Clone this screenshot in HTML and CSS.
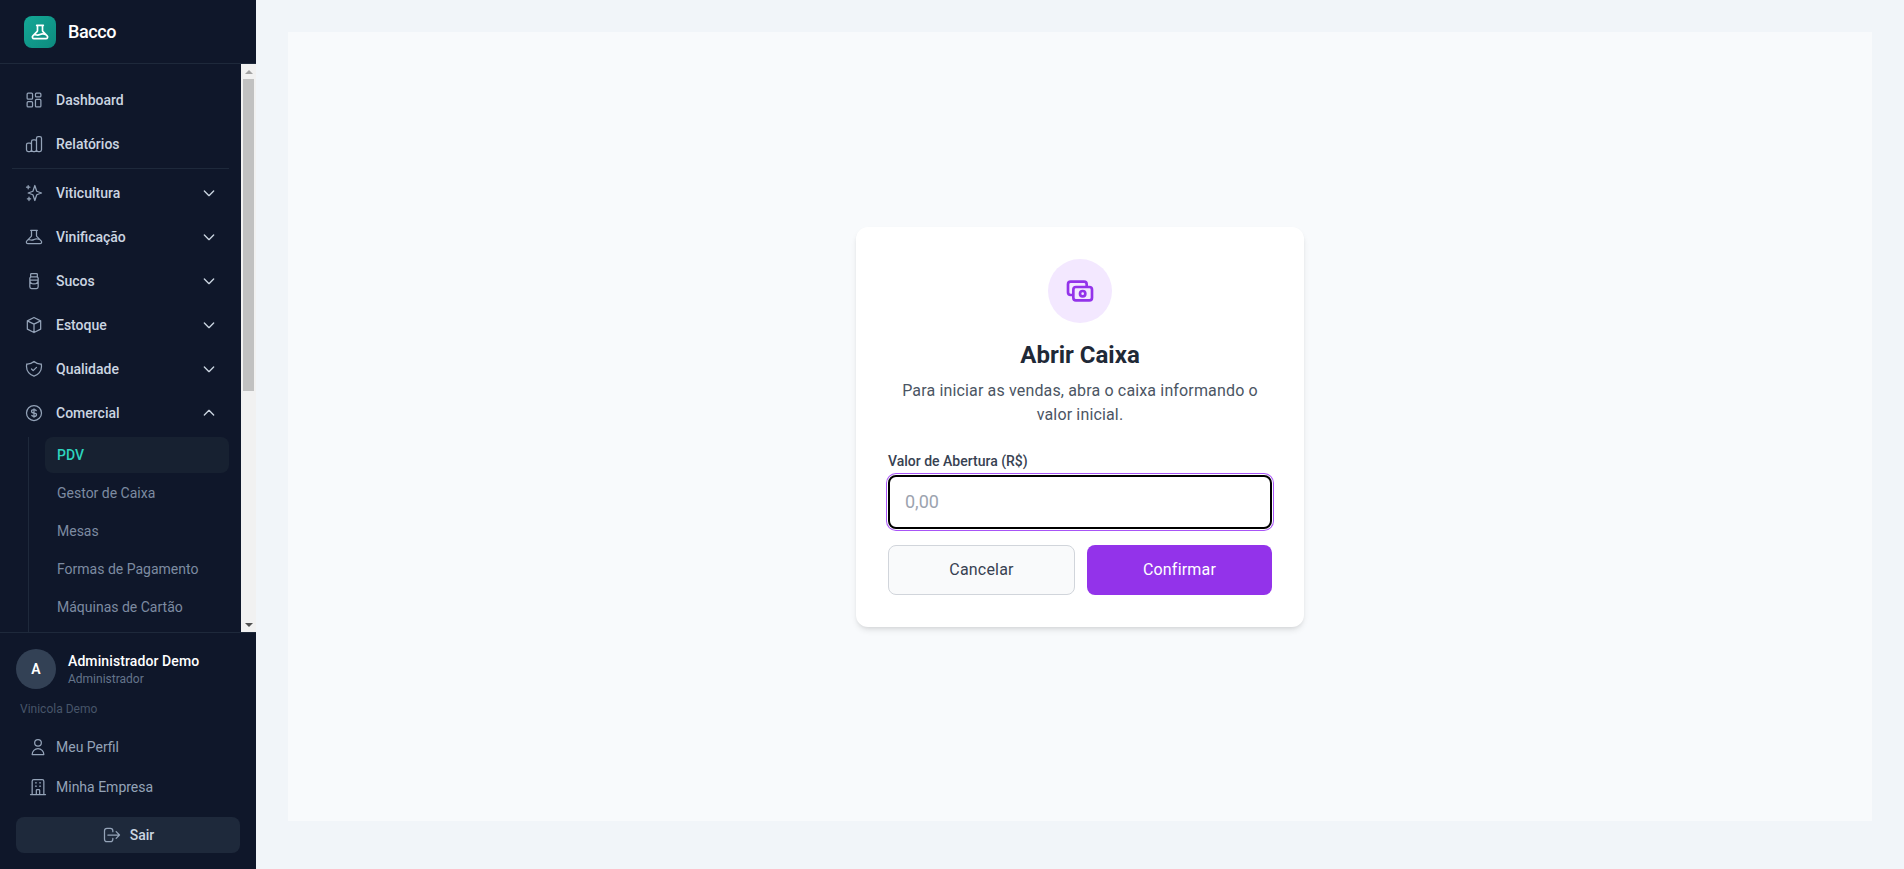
FILE: index.html
```html
<!DOCTYPE html>
<html lang="en">
<head>
    <meta charset="UTF-8">
    <meta name="viewport" content="width=device-width, initial-scale=1.0">
    <title>Bacco - PDV</title>
    <link rel="stylesheet" href="styles.css">
</head>
<body>
    <div class="app">
        <aside class="sidebar">
            <div class="brand">
                <span class="brand-logo">
                    <svg viewBox="0 0 24 24"><path d="M19.428 15.428a2 2 0 00-1.022-.547l-2.387-.477a6 6 0 00-3.86.517l-.318.158a6 6 0 01-3.86.517L6.05 15.21a2 2 0 00-1.806.547M8 4h8l-1 1v5.172a2 2 0 00.586 1.414l5 5c1.26 1.26.367 3.414-1.415 3.414H4.828c-1.782 0-2.674-2.154-1.414-3.414l5-5A2 2 0 009 10.172V5L8 4z"/></svg>
                </span>
                <span class="brand-name">Bacco</span>
            </div>

            <div class="nav-wrap">
                <nav class="nav">
                    <a class="nav-link">
                        <svg class="icon" viewBox="0 0 24 24"><rect x="3.75" y="3.75" width="6.5" height="7.25" rx="1.2"/><rect x="13.75" y="3.75" width="6.5" height="4.5" rx="1.2"/><rect x="3.75" y="14" width="6.5" height="6.25" rx="1.2"/><rect x="13.75" y="11.25" width="6.5" height="9" rx="1.2"/></svg>
                        <span>Dashboard</span>
                    </a>
                    <a class="nav-link">
                        <svg class="icon" viewBox="0 0 24 24"><path d="M9 19v-6a2 2 0 00-2-2H5a2 2 0 00-2 2v6a2 2 0 002 2h2a2 2 0 002-2zm0 0V9a2 2 0 012-2h2a2 2 0 012 2v10m-6 0a2 2 0 002 2h2a2 2 0 002-2m0 0V5a2 2 0 012-2h2a2 2 0 012 2v14a2 2 0 01-2 2h-2a2 2 0 01-2-2z"/></svg>
                        <span>Relatórios</span>
                    </a>
                    <div class="nav-divider"></div>
                    <a class="nav-link">
                        <svg class="icon" viewBox="0 0 24 24"><path d="M5 3v4M3 5h4M6 17v4m-2-2h4m5-16l2.286 6.857L21 12l-5.714 2.143L13 21l-2.286-6.857L5 12l5.714-2.143L13 3z"/></svg>
                        <span>Viticultura</span>
                        <svg class="chevron" viewBox="0 0 24 24"><path d="M19 9l-7 7-7-7"/></svg>
                    </a>
                    <a class="nav-link">
                        <svg class="icon" viewBox="0 0 24 24"><path d="M19.428 15.428a2 2 0 00-1.022-.547l-2.387-.477a6 6 0 00-3.86.517l-.318.158a6 6 0 01-3.86.517L6.05 15.21a2 2 0 00-1.806.547M8 4h8l-1 1v5.172a2 2 0 00.586 1.414l5 5c1.26 1.26.367 3.414-1.415 3.414H4.828c-1.782 0-2.674-2.154-1.414-3.414l5-5A2 2 0 009 10.172V5L8 4z"/></svg>
                        <span>Vinificação</span>
                        <svg class="chevron" viewBox="0 0 24 24"><path d="M19 9l-7 7-7-7"/></svg>
                    </a>
                    <a class="nav-link">
                        <svg class="icon" viewBox="0 0 24 24"><path d="M9 3h6a1 1 0 011 1v3l1 1.5V19a2 2 0 01-2 2H9a2 2 0 01-2-2V8.5L8 7V4a1 1 0 011-1zM8 7h8M7 11h10M7 11c0 3 2 4.5 5 4.5s5-1.5 5-4.5"/></svg>
                        <span>Sucos</span>
                        <svg class="chevron" viewBox="0 0 24 24"><path d="M19 9l-7 7-7-7"/></svg>
                    </a>
                    <a class="nav-link">
                        <svg class="icon" viewBox="0 0 24 24"><path d="M20 7l-8-4-8 4m16 0l-8 4m8-4v10l-8 4m0-10L4 7m8 4v10M4 7v10l8 4"/></svg>
                        <span>Estoque</span>
                        <svg class="chevron" viewBox="0 0 24 24"><path d="M19 9l-7 7-7-7"/></svg>
                    </a>
                    <a class="nav-link">
                        <svg class="icon" viewBox="0 0 24 24"><path d="M9 12l2 2 4-4m5.618-4.016A11.955 11.955 0 0112 2.944a11.955 11.955 0 01-8.618 3.04A12.02 12.02 0 003 9c0 5.591 3.824 10.29 9 11.622 5.176-1.332 9-6.03 9-11.622 0-1.042-.133-2.052-.382-3.016z"/></svg>
                        <span>Qualidade</span>
                        <svg class="chevron" viewBox="0 0 24 24"><path d="M19 9l-7 7-7-7"/></svg>
                    </a>
                    <a class="nav-link">
                        <svg class="icon" viewBox="0 0 24 24"><path d="M12 8c-1.657 0-3 .895-3 2s1.343 2 3 2 3 .895 3 2-1.343 2-3 2m0-8c1.11 0 2.08.402 2.599 1M12 8V7m0 1v8m0 0v1m0-1c-1.11 0-2.08-.402-2.599-1M21 12a9 9 0 11-18 0 9 9 0 0118 0z"/></svg>
                        <span>Comercial</span>
                        <svg class="chevron" viewBox="0 0 24 24"><path d="M5 15l7-7 7 7"/></svg>
                    </a>
                    <div class="subnav">
                        <a class="subnav-link active">PDV</a>
                        <a class="subnav-link">Gestor de Caixa</a>
                        <a class="subnav-link">Mesas</a>
                        <a class="subnav-link">Formas de Pagamento</a>
                        <a class="subnav-link">Máquinas de Cartão</a>
                    </div>
                </nav>
                <div class="scrollbar">
                    <div class="scroll-btn"><span class="arrow-up"></span></div>
                    <div class="scroll-track"><div class="scroll-thumb"></div></div>
                    <div class="scroll-btn"><span class="arrow-down"></span></div>
                </div>
            </div>

            <div class="user-panel">
                <div class="user-row">
                    <span class="avatar">A</span>
                    <div class="user-info">
                        <div class="user-name">Administrador Demo</div>
                        <div class="user-role">Administrador</div>
                    </div>
                </div>
                <div class="user-company">Vinicola Demo</div>
                <a class="user-link">
                    <svg class="icon" viewBox="0 0 24 24"><path d="M16 7a4 4 0 11-8 0 4 4 0 018 0zM12 14a7 7 0 00-7 7h14a7 7 0 00-7-7z"/></svg>
                    <span>Meu Perfil</span>
                </a>
                <a class="user-link">
                    <svg class="icon" viewBox="0 0 24 24"><path d="M19 21V5a2 2 0 00-2-2H7a2 2 0 00-2 2v16m14 0h2m-2 0h-5m-9 0H3m2 0h5M9 7h1m-1 4h1m4-4h1m-1 4h1m-5 10v-5a1 1 0 011-1h2a1 1 0 011 1v5m-4 0h4"/></svg>
                    <span>Minha Empresa</span>
                </a>
                <button class="logout-button">
                    <svg class="icon" viewBox="0 0 24 24"><path d="M17 16l4-4m0 0l-4-4m4 4H7m6 4v1a3 3 0 01-3 3H6a3 3 0 01-3-3V7a3 3 0 013-3h4a3 3 0 013 3v1"/></svg>
                    <span>Sair</span>
                </button>
            </div>
        </aside>

        <main class="content">
            <div class="panel">
                <div class="card">
                    <div class="card-icon">
                        <svg viewBox="0 0 24 24"><path d="M17 9V7a2 2 0 00-2-2H5a2 2 0 00-2 2v6a2 2 0 002 2h2m2 4h10a2 2 0 002-2v-6a2 2 0 00-2-2H9a2 2 0 00-2 2v6a2 2 0 002 2zm7-5a2 2 0 11-4 0 2 2 0 014 0z"/></svg>
                    </div>
                    <h2>Abrir Caixa</h2>
                    <p>Para iniciar as vendas, abra o caixa informando o valor inicial.</p>
                    <label for="openValue">Valor de Abertura (R$)</label>
                    <input id="openValue" class="value-input" type="text" placeholder="0,00">
                    <div class="card-actions">
                        <button class="btn-cancel">Cancelar</button>
                        <button class="btn-confirm">Confirmar</button>
                    </div>
                </div>
            </div>
        </main>
    </div>
</body>
</html>
```
FILE: styles.css
```css
* {
    box-sizing: border-box;
    margin: 0;
    padding: 0;
}

body {
    font-family: Roboto, Arial, sans-serif;
    background-color: #f1f5f9;
}

svg {
    fill: none;
    stroke: currentColor;
    stroke-width: 1.5;
    stroke-linecap: round;
    stroke-linejoin: round;
}

.app {
    display: flex;
    height: 100vh;
}

.sidebar {
    width: 256px;
    flex-shrink: 0;
    display: flex;
    flex-direction: column;
    background-color: #0f172a;
    color: #cbd5e1;
}

.brand {
    height: 64px;
    flex-shrink: 0;
    display: flex;
    align-items: center;
    gap: 12px;
    padding: 0 24px;
    border-bottom: 1px solid #1e293b;
}

.brand-logo {
    width: 32px;
    height: 32px;
    display: flex;
    align-items: center;
    justify-content: center;
    border-radius: 8px;
    background: linear-gradient(135deg, #14a896, #0d8a7e);
    color: #ffffff;
}

.brand-logo svg {
    width: 20px;
    height: 20px;
    stroke-width: 2;
}

.brand-name {
    font-size: 18px;
    font-weight: 500;
    letter-spacing: -0.4px;
    color: #ffffff;
}

.nav-wrap {
    flex: 1;
    min-height: 0;
    display: flex;
}

.nav {
    flex: 1;
    min-width: 0;
    display: flex;
    flex-direction: column;
    overflow: hidden;
    padding: 14px 12px 0;
}

.scrollbar {
    width: 15px;
    flex-shrink: 0;
    display: flex;
    flex-direction: column;
    background: #f1f1f1;
}

.scroll-btn {
    height: 15px;
    flex-shrink: 0;
    display: flex;
    align-items: center;
    justify-content: center;
}

.arrow-up,
.arrow-down {
    width: 0;
    height: 0;
    border-left: 4px solid transparent;
    border-right: 4px solid transparent;
}

.arrow-up {
    border-bottom: 4px solid #a3a3a3;
}

.arrow-down {
    border-top: 4px solid #505050;
}

.scroll-track {
    flex: 1;
    padding: 0 2px;
}

.scroll-thumb {
    height: 312px;
    background: #c1c1c1;
}

.nav-link {
    height: 44px;
    flex-shrink: 0;
    display: flex;
    align-items: center;
    gap: 12px;
    padding: 0 12px;
    font-size: 14px;
    font-weight: 500;
    color: #cbd5e1;
    cursor: pointer;
}

.icon {
    width: 20px;
    height: 20px;
    flex-shrink: 0;
    color: #94a3b8;
}

.chevron {
    width: 16px;
    height: 16px;
    margin-left: auto;
    stroke-width: 2;
    color: #cbd5e1;
}

.nav-divider {
    height: 1px;
    flex-shrink: 0;
    margin: 2px 0;
    background: #1e293b;
}

.subnav {
    flex: 1;
    margin: 2px 0 0 16px;
    padding-left: 16px;
    border-left: 1px solid #1e293b;
}

.subnav-link {
    display: flex;
    align-items: center;
    height: 36px;
    margin-bottom: 2px;
    padding: 0 12px;
    border-radius: 8px;
    font-size: 14px;
    color: #7d8ba1;
    cursor: pointer;
}

.subnav-link.active {
    background: #172131;
    color: #2dd4bf;
    font-weight: 500;
}

.user-panel {
    flex-shrink: 0;
    padding: 16px;
    border-top: 1px solid #1e293b;
}

.user-row {
    display: flex;
    align-items: center;
    gap: 12px;
}

.avatar {
    width: 40px;
    height: 40px;
    display: flex;
    align-items: center;
    justify-content: center;
    border-radius: 50%;
    background: #334155;
    color: #ffffff;
    font-size: 14px;
    font-weight: 600;
}

.user-name {
    font-size: 14px;
    line-height: 20px;
    font-weight: 500;
    letter-spacing: 0.1px;
    color: #ffffff;
}

.user-role {
    font-size: 12px;
    line-height: 16px;
    color: #64748b;
}

.user-company {
    margin: 12px 4px 10px;
    font-size: 12px;
    line-height: 16px;
    color: #475569;
}

.user-link {
    height: 40px;
    display: flex;
    align-items: center;
    gap: 8px;
    padding: 0 12px;
    font-size: 14px;
    color: #94a3b8;
    cursor: pointer;
}

.logout-button {
    width: 100%;
    height: 36px;
    margin-top: 10px;
    display: flex;
    align-items: center;
    justify-content: center;
    gap: 8px;
    border: none;
    border-radius: 8px;
    background: #1e293b;
    color: #cbd5e1;
    font-family: inherit;
    font-size: 14px;
    font-weight: 500;
    cursor: pointer;
}

.content {
    flex: 1;
    padding: 32px 32px 48px;
    min-width: 0;
}

.panel {
    height: 100%;
    display: flex;
    align-items: center;
    justify-content: center;
    background: #f8fafc;
}

.card {
    width: 448px;
    padding: 32px;
    border-radius: 12px;
    background: #ffffff;
    box-shadow: 0 4px 6px -1px rgba(0,0,0,0.1), 0 2px 4px -2px rgba(0,0,0,0.1);
    text-align: center;
}

.card-icon {
    width: 64px;
    height: 64px;
    margin: 0 auto 16px;
    display: flex;
    align-items: center;
    justify-content: center;
    border-radius: 50%;
    background: #f3e8ff;
    color: #9333ea;
}

.card-icon svg {
    width: 32px;
    height: 32px;
    stroke-width: 2;
}

.card h2 {
    font-size: 24px;
    line-height: 32px;
    font-weight: 700;
    color: #1f2937;
    margin-bottom: 8px;
}

.card p {
    font-size: 16px;
    line-height: 24px;
    letter-spacing: 0.15px;
    color: #4b5563;
    margin-bottom: 24px;
}

.card label {
    display: block;
    text-align: left;
    font-size: 14px;
    line-height: 20px;
    font-weight: 500;
    color: #374151;
    margin-bottom: 4px;
}

.value-input {
    display: block;
    width: 100%;
    height: 54px;
    padding: 0 15px;
    border: 2px solid #000000;
    border-radius: 8px;
    outline: none;
    box-shadow: 0 0 0 1px #ffffff, 0 0 0 2px #a855f7;
    background: #ffffff;
    font-family: inherit;
    font-size: 18px;
}

.value-input::placeholder {
    color: #9ca3af;
}

.card-actions {
    display: flex;
    gap: 12px;
    margin-top: 16px;
}

.card-actions button {
    flex: 1;
    height: 50px;
    border-radius: 8px;
    font-family: inherit;
    font-size: 16px;
    font-weight: 400;
    letter-spacing: 0.2px;
    cursor: pointer;
}

.btn-cancel {
    border: 1px solid #d1d5db;
    background: #f9fafb;
    color: #374151;
}

.btn-confirm {
    border: none;
    background: #9333ea;
    color: #ffffff;
}
```
